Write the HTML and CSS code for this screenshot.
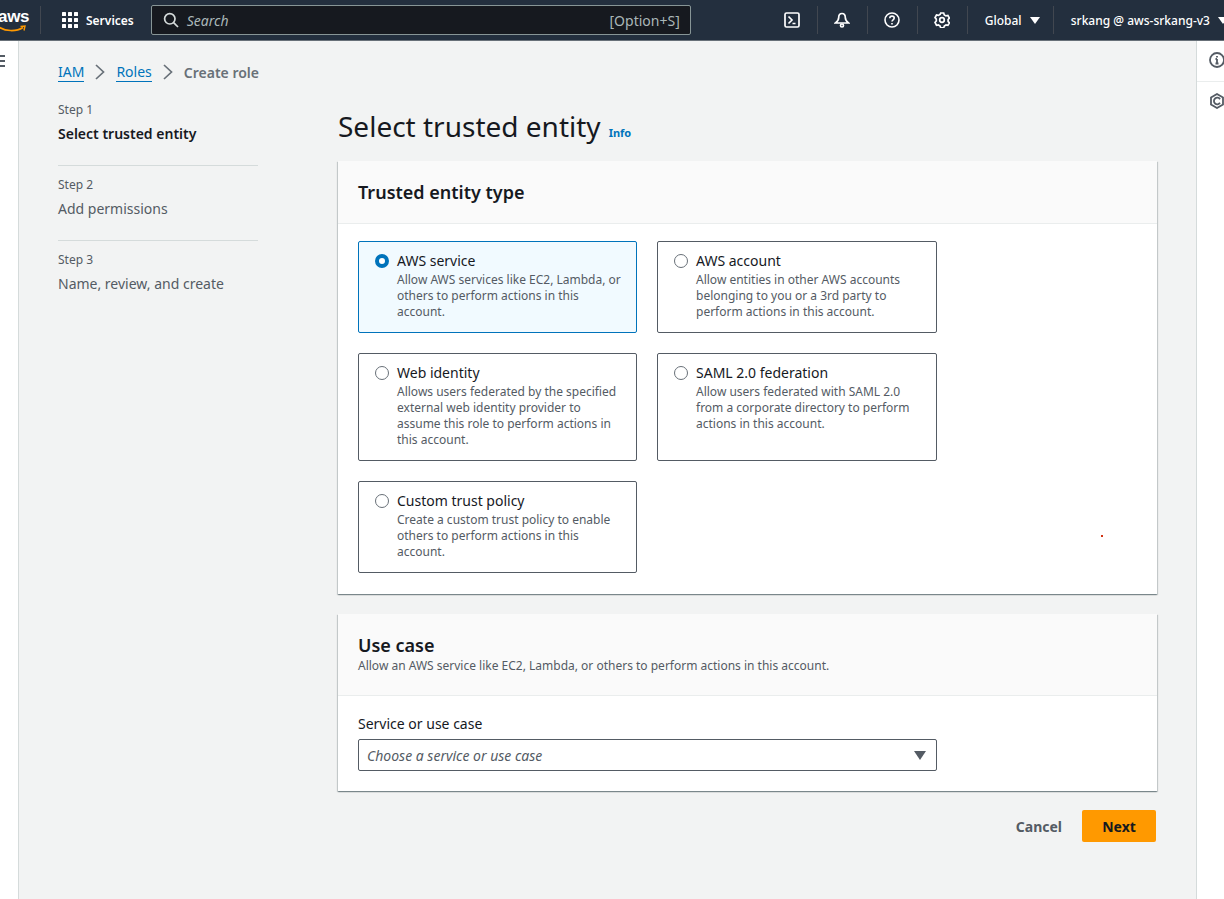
FILE: index.html
```html
<!DOCTYPE html>
<html lang="en">
<head>
    <meta charset="UTF-8">
    <meta name="viewport" content="width=device-width, initial-scale=1.0">
    <title>Select trusted entity</title>
    <link rel="stylesheet" href="styles.css">
</head>
<body>
    <header class="topbar">
        <div class="logo">
            <span class="logo-text">aws</span>
            <svg class="logo-smile" width="30" height="9" viewBox="0 0 30 9"><path d="M1 1.5C8 6.5 19 7 26 2.5" fill="none" stroke="#ff9900" stroke-width="1.6"/><path d="M23.5 1.5L28 1l-1 4.5" fill="none" stroke="#ff9900" stroke-width="1.4"/></svg>
        </div>
        <div class="services">
            <svg width="16" height="16" viewBox="0 0 16 16" fill="#fff"><rect width="4" height="4" rx=".5"/><rect x="6" width="4" height="4" rx=".5"/><rect x="12" width="4" height="4" rx=".5"/><rect y="6" width="4" height="4" rx=".5"/><rect x="6" y="6" width="4" height="4" rx=".5"/><rect x="12" y="6" width="4" height="4" rx=".5"/><rect y="12" width="4" height="4" rx=".5"/><rect x="6" y="12" width="4" height="4" rx=".5"/><rect x="12" y="12" width="4" height="4" rx=".5"/></svg>
            <span>Services</span>
        </div>
        <div class="search">
            <svg width="16" height="16" viewBox="0 0 16 16" fill="none" stroke="#d5dbdb" stroke-width="1.7"><circle cx="6.8" cy="6.8" r="5.2"/><path d="M10.6 10.6L15 15"/></svg>
            <span class="search-text">Search</span>
            <span class="search-key">[Option+S]</span>
        </div>
        <div class="nav-icons">
            <div class="nav-icon">
                <svg width="16" height="16" viewBox="0 0 16 16" fill="none" stroke="#fff" stroke-width="1.7"><rect x="1" y="1" width="14" height="14" rx="1.5"/><path d="M4.5 4.5L8 8l-3.500 3.500M8.500 11.500h3"/></svg>
            </div>
            <div class="nav-icon">
                <svg width="16" height="16" viewBox="0 0 16 16" fill="none" stroke="#fff" stroke-width="1.7"><path d="M8 1.500c-2.500 0-3.300 2-3.300 4 0 2.500-1.200 4-3.200 5.500h13c-2-1.500-3.200-3-3.200-5.500 0-2-.8-4-3.300-4z"/><circle cx="8" cy="13.500" r="1.500"/></svg>
            </div>
            <div class="nav-icon">
                <svg width="16" height="16" viewBox="0 0 16 16" fill="none" stroke="#fff" stroke-width="1.6"><circle cx="8" cy="8" r="7"/><path d="M5.800 6.200C5.800 4.900 6.800 4.100 8 4.100s2.200.8 2.200 2c0 1.700-2.200 1.700-2.200 3.400"/><path d="M8 11v1.500"/></svg>
            </div>
            <div class="nav-icon">
                <svg width="16" height="16" viewBox="0 0 16 16" fill="none" stroke="#fff" stroke-width="1.7"><path d="M6.500 1h3l.6 1.900 1.700 1 1.900-.4 1.500 2.600-1.300 1.400v1.900l1.300 1.400-1.500 2.600-1.900-.4-1.700 1-.6 1.900h-3l-.6-1.900-1.700-1-1.900.4L.8 10.400l1.300-1.400V7.100L.8 5.600l1.500-2.600 1.900.4 1.700-1z" transform="translate(.2 0)"/><circle cx="8" cy="8" r="2.300"/></svg>
            </div>
        </div>
        <div class="nav-menu region">Global <i class="caret"></i></div>
        <div class="nav-menu account">srkang @ aws-srkang-v3 <i class="caret"></i></div>
    </header>

    <div class="layout">
        <aside class="left-rail">
            <svg class="menu-icon" width="16" height="14" viewBox="0 0 16 14" fill="#545b64"><rect y="0" width="16" height="2"/><rect y="5" width="16" height="2"/><rect y="10" width="16" height="2"/></svg>
        </aside>

        <main class="content">
            <nav class="crumbs">
                <a class="crumb-link">IAM</a>
                <svg width="10" height="16" viewBox="0 0 10 16" fill="none" stroke="#687078" stroke-width="1.7"><path d="M1 1l7.500 7L1 15"/></svg>
                <a class="crumb-link">Roles</a>
                <svg width="10" height="16" viewBox="0 0 10 16" fill="none" stroke="#687078" stroke-width="1.7"><path d="M1 1l7.500 7L1 15"/></svg>
                <span class="crumb-current">Create role</span>
            </nav>

            <div class="wizard">
                <ol class="steps">
                    <li class="step active">
                        <small>Step 1</small>
                        <span>Select trusted entity</span>
                    </li>
                    <li class="step">
                        <small>Step 2</small>
                        <span>Add permissions</span>
                    </li>
                    <li class="step">
                        <small>Step 3</small>
                        <span>Name, review, and create</span>
                    </li>
                </ol>

                <div class="form">
                    <div class="page-title">
                        <h1>Select trusted entity</h1>
                        <a class="info">Info</a>
                    </div>

                    <section class="card entity-card">
                        <div class="card-head">
                            <h2>Trusted entity type</h2>
                        </div>
                        <div class="card-body tiles">
                            <label class="tile selected">
                                <i class="radio"></i>
                                <div>
                                    <div class="tile-title">AWS service</div>
                                    <div class="tile-desc">Allow AWS services like EC2, Lambda, or others to perform actions in this account.</div>
                                </div>
                            </label>
                            <label class="tile">
                                <i class="radio"></i>
                                <div>
                                    <div class="tile-title">AWS account</div>
                                    <div class="tile-desc">Allow entities in other AWS accounts belonging to you or a 3rd party to perform actions in this account.</div>
                                </div>
                            </label>
                            <label class="tile">
                                <i class="radio"></i>
                                <div>
                                    <div class="tile-title">Web identity</div>
                                    <div class="tile-desc">Allows users federated by the specified external web identity provider to assume this role to perform actions in this account.</div>
                                </div>
                            </label>
                            <label class="tile">
                                <i class="radio"></i>
                                <div>
                                    <div class="tile-title">SAML 2.0 federation</div>
                                    <div class="tile-desc">Allow users federated with SAML 2.0 from a corporate directory to perform actions in this account.</div>
                                </div>
                            </label>
                            <label class="tile">
                                <i class="radio"></i>
                                <div>
                                    <div class="tile-title">Custom trust policy</div>
                                    <div class="tile-desc">Create a custom trust policy to enable others to perform actions in this account.</div>
                                </div>
                            </label>
                        </div>
                        <i class="red-dot"></i>
                    </section>

                    <section class="card">
                        <div class="card-head usecase-head">
                            <h2>Use case</h2>
                            <p>Allow an AWS service like EC2, Lambda, or others to perform actions in this account.</p>
                        </div>
                        <div class="card-body usecase-body">
                            <div class="field-label">Service or use case</div>
                            <div class="select">
                                <span>Choose a service or use case</span>
                                <i class="select-caret"></i>
                            </div>
                        </div>
                    </section>

                    <div class="actions">
                        <button class="btn-cancel">Cancel</button>
                        <button class="btn-next">Next</button>
                    </div>
                </div>
            </div>
        </main>

        <aside class="right-rail">
            <div class="rail-item">
                <svg width="16" height="16" viewBox="0 0 16 16" fill="none" stroke="#545b64" stroke-width="1.800"><circle cx="8" cy="8" r="7"/><path d="M8 7v4.500M6.500 11.500h3M6.500 7H8"/><path d="M8 4v1.500"/></svg>
            </div>
            <div class="rail-item">
                <svg width="16" height="16" viewBox="0 0 16 16" fill="none" stroke="#545b64" stroke-width="1.800"><path d="M8 1l6 3.500v7L8 15l-6-3.500v-7z"/><path d="M11 6.200A3.300 3.300 0 1 0 11 9.800"/></svg>
            </div>
        </aside>
    </div>
</body>
</html>
```

FILE: styles.css
```css
* {
    box-sizing: border-box;
}
html, body {
    height: 100%;
}
body {
    margin: 0;
    font-family: "Noto Sans", "Open Sans", sans-serif;
    font-size: 14px;
    color: #16191f;
    background: #f2f3f3;
    overflow: hidden;
}

/* top bar */
.topbar {
    height: 41px;
    background: #232f3e;
    border-bottom: 1px solid #687078;
    display: flex;
    align-items: center;
    color: #fff;
    overflow: hidden;
}
.logo {
    width: 45px;
    height: 28px;
    flex: none;
    margin-left: -4px;
    margin-right: 3px;
    border-right: 1px solid #414750;
    position: relative;
    line-height: 22px;
}
.logo-text {
    font-family: "Liberation Sans", sans-serif;
    font-size: 17px;
    font-weight: 700;
    letter-spacing: -0.3px;
    margin-left: 2px;
}
.logo-smile {
    position: absolute;
    left: 1px;
    top: 19px;
}
.services {
    display: flex;
    align-items: center;
    gap: 8px;
    margin-left: 18px;
    font-size: 12px;
    font-weight: 600;
    flex: none;
}
.search {
    width: 540px;
    height: 30px;
    margin-left: 17px;
    flex: none;
    display: flex;
    align-items: center;
    padding: 0 10px 0 11px;
    background: #16191f;
    border: 1px solid #879596;
    border-radius: 2px;
}
.search-text {
    margin-left: 8px;
    font-style: italic;
    color: #aab7b8;
    font-size: 14px;
}
.search-key {
    margin-left: auto;
    color: #aab7b8;
    font-size: 14px;
}
.nav-icons {
    display: flex;
    margin-left: 77px;
    flex: none;
}
.nav-icon {
    width: 50px;
    height: 28px;
    display: flex;
    align-items: center;
    justify-content: center;
    border-right: 1px solid #414750;
}
.nav-menu {
    height: 28px;
    display: flex;
    align-items: center;
    font-size: 12px;
    font-weight: 500;
    flex: none;
    white-space: pre;
}
.region {
    width: 86px;
    padding-left: 17px;
    border-right: 1px solid #414750;
}
.account {
    padding-left: 17px;
}
.caret {
    display: inline-block;
    width: 0;
    height: 0;
    margin-left: 5px;
    border-left: 5px solid transparent;
    border-right: 5px solid transparent;
    border-top: 7px solid #fff;
}

/* page */
.layout {
    display: flex;
    height: calc(100% - 41px);
}
.left-rail {
    width: 19px;
    flex: none;
    background: #fff;
    border-right: 1px solid #d5dbdb;
    overflow: hidden;
}
.menu-icon {
    margin: 14px 0 0 -11px;
    display: block;
}
.content {
    flex: 1;
    padding: 21px 39px 0;
}
.right-rail {
    width: 29px;
    flex: none;
    background: #fff;
    border-left: 1px solid #d5dbdb;
    overflow: hidden;
}
.rail-item {
    height: 41px;
    padding: 11px 0 0 12px;
    border-bottom: 1px solid #eaeded;
}
.rail-item:last-child {
    border-bottom: none;
}
.rail-item svg {
    display: block;
}

/* breadcrumb */
.crumbs {
    display: flex;
    align-items: center;
    gap: 11px;
    height: 20px;
    font-size: 14px;
}
.crumb-link {
    color: #0073bb;
    border-bottom: 1px solid #0073bb;
    line-height: 19px;
}
.crumb-current {
    color: #687078;
    font-weight: 600;
}

/* wizard */
.wizard {
    display: grid;
    grid-template-columns: 200px 819px;
    column-gap: 80px;
    margin-top: 9px;
}
.steps {
    list-style: none;
    margin: 0;
    padding: 0;
}
.step {
    height: 75px;
    padding-top: 10px;
    border-bottom: 1px solid #d5dbdb;
    color: #545b64;
}
.step:last-child {
    border-bottom: none;
}
.step small {
    display: block;
    font-size: 12px;
    line-height: 18px;
    margin-bottom: 5px;
}
.step span {
    display: block;
    line-height: 20px;
}
.step.active span {
    color: #16191f;
    font-weight: 600;
}

.page-title {
    height: 70px;
    display: flex;
    align-items: center;
    gap: 8px;
    padding-top: 0;
}
.page-title h1 {
    margin: 0;
    font-size: 28px;
    font-weight: 400;
    line-height: 40px;
}
.info {
    font-size: 11px;
    font-weight: 700;
    color: #0073bb;
    margin-top: 12px;
}

/* cards */
.card {
    position: relative;
    background: #fff;
    box-shadow: 0 1px 1px 0 rgba(0, 28, 36, 0.3), 1px 1px 1px 0 rgba(0, 28, 36, 0.15), -1px 1px 1px 0 rgba(0, 28, 36, 0.15);
    margin-bottom: 20px;
}
.card-head {
    height: 63px;
    padding: 19px 20px 0;
    background: #fafafa;
    border-bottom: 1px solid #eaeded;
}
.card-head h2 {
    margin: 0;
    font-size: 18px;
    font-weight: 600;
    line-height: 24px;
}
.entity-card {
    height: 433px;
}
.tiles {
    display: grid;
    grid-template-columns: 279px 280px;
    grid-template-rows: 92px 108px 92px;
    gap: 20px;
    padding: 17px 20px 0;
}
.tile {
    display: flex;
    gap: 8px;
    padding: 9px 14px 0 16px;
    border: 1px solid #545b64;
    border-radius: 2px;
}
.tile.selected {
    background: #f1faff;
    border-color: #0073bb;
}
.radio {
    flex: none;
    width: 14px;
    height: 14px;
    margin-top: 3px;
    border: 1px solid #687078;
    border-radius: 50%;
    background: #fff;
}
.selected .radio {
    border: 4px solid #0073bb;
}
.tile-title {
    line-height: 20px;
}
.tile-desc {
    margin-top: 1px;
    font-size: 12px;
    line-height: 16px;
    color: #545b64;
}
.red-dot {
    position: absolute;
    left: 763px;
    top: 374px;
    width: 2px;
    height: 2px;
    background: #d13212;
}
.usecase-head {
    height: 82px;
    padding-top: 19px;
}
.usecase-head p {
    margin: 0;
    font-size: 12px;
    line-height: 18px;
    color: #545b64;
}
.usecase-body {
    height: 95px;
    padding: 18px 20px 0;
}
.field-label {
    line-height: 20px;
    margin-bottom: 5px;
}
.select {
    width: 579px;
    height: 32px;
    display: flex;
    align-items: center;
    justify-content: space-between;
    padding: 0 10px 0 8px;
    border: 1px solid #545b64;
    border-radius: 2px;
    color: #545b64;
    font-style: italic;
}
.select-caret {
    width: 0;
    height: 0;
    border-left: 6px solid transparent;
    border-right: 6px solid transparent;
    border-top: 9px solid #545b64;
}
.actions {
    display: flex;
    justify-content: flex-end;
    align-items: center;
    gap: 20px;
    padding-right: 1px;
    margin-top: -1px;
}
.actions button {
    font-family: inherit;
    font-size: 14px;
    font-weight: 700;
    height: 32px;
    border: none;
    border-radius: 2px;
}
.btn-cancel {
    background: none;
    color: #545b64;
    padding: 0 10px;
    margin-right: -10px;
}
.btn-next {
    width: 74px;
    background: #ff9900;
    color: #16191f;
}
```
